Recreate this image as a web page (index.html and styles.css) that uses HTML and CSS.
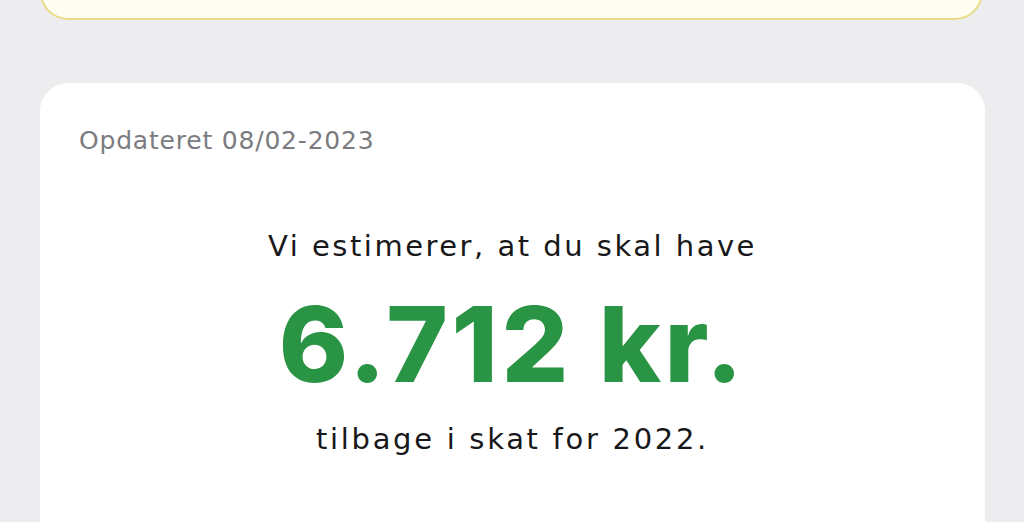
FILE: index.html
```html
<!DOCTYPE html>
<html lang="da">
<head>
<meta charset="utf-8">
<link rel="stylesheet" href="styles.css">
</head>
<body>
<div class="page">
  <div class="top-card"></div>
  <div class="card">
    <div class="updated">Opdateret 08/02-2023</div>
    <div class="estimate">
      <div class="lead">Vi estimerer, at du skal have</div>
      <div class="amount">6.712 kr.</div>
      <div class="tail">tilbage i skat for 2022.</div>
    </div>
  </div>
</div>
</body>
</html>
```
FILE: styles.css
```css
html, body {
  margin: 0;
  padding: 0;
  background: #ededef;
  height: 522px;
  overflow: hidden;
}
.page {
  padding: 0 39px 0 40px;
  font-family: "DejaVu Sans", "Inter", sans-serif;
}
.top-card {
  height: 58px;
  margin-top: -40px;
  margin-right: 2px;
  background: linear-gradient(#ffffff, #fffdf0);
  border: 2px solid #e9dc86;
  border-radius: 0 0 28px 28px;
  border-top: none;
}
.card {
  box-sizing: border-box;
  margin-top: 63px;
  background: #ffffff;
  border-radius: 28px 28px 0 0;
  height: 439px;
  padding: 44px 39px 0 39px;
}
.updated {
  font-size: 25px;
  letter-spacing: 0.8px;
  color: #7b7b80;
  line-height: 28px;
}
.estimate {
  text-align: center;
  padding-top: 74px;
  color: #18181a;
}
.lead {
  font-size: 29px;
  letter-spacing: 2.5px;
  line-height: 34px;
}
.amount {
  font-family: "Inter", sans-serif;
  font-size: 105px;
  font-weight: 800;
  letter-spacing: 3.6px;
  color: #2a9445;
  line-height: 120px;
  margin-top: 21px;
}
.tail {
  font-size: 29px;
  letter-spacing: 2.7px;
  line-height: 34px;
  margin-top: 18px;
}
```
